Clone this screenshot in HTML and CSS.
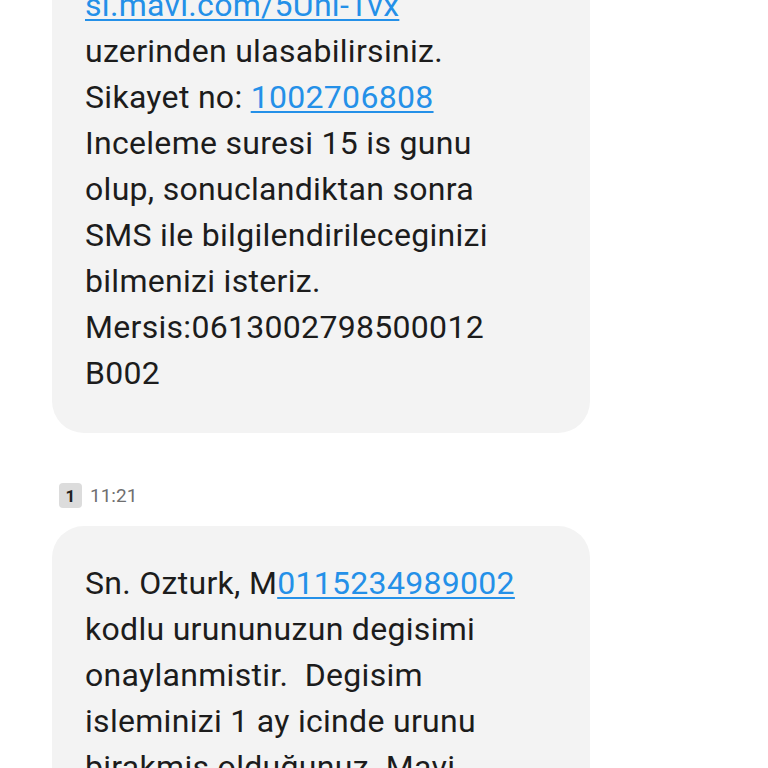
FILE: index.html
```html
<!DOCTYPE html>
<html>
<head>
<meta charset="utf-8">
<link rel="stylesheet" href="styles.css">
</head>
<body>
<div class="thread">
  <div class="bubble">
    <p class="msg"><a class="link" href="#">sl.mavi.com/5Uni-1vx</a><br>uzerinden ulasabilirsiniz.<br>Sikayet no: <a class="link" href="#">1002706808</a><br>Inceleme suresi 15 is gunu<br>olup, sonuclandiktan sonra<br>SMS ile bilgilendirileceginizi<br>bilmenizi isteriz.<br>Mersis:0613002798500012<br>B002</p>
  </div>
  <div class="meta">
    <span class="sim">1</span>
    <span class="time">11:21</span>
  </div>
  <div class="bubble">
    <p class="msg">Sn. Ozturk, M<a class="link" href="#">0115234989002</a><br>kodlu urununuzun degisimi<br>onaylanmistir.&nbsp; Degisim<br>isleminizi 1 ay icinde urunu<br>birakmis oldu&#287;unuz. Mavi<br>magazasindan yapabilirsiniz.</p>
  </div>
</div>
</body>
</html>
```
FILE: styles.css
```css
html, body {
  margin: 0;
  padding: 0;
  background: #ffffff;
  height: 768px;
  overflow: hidden;
}
body {
  font-family: Roboto, "Noto Sans", sans-serif;
  color: #1c1c1c;
}
.thread {
  margin-top: -52px;
  padding-left: 52px;
  display: flex;
  flex-direction: column;
}
.bubble {
  width: 538px;
  box-sizing: border-box;
  background: #f3f3f3;
  border-radius: 32px;
  padding: 34px 33px 37px 33px;
}
.msg {
  margin: 0;
  font-size: 32px;
  letter-spacing: 0.3px;
  line-height: 46px;
  white-space: nowrap;
}
.link {
  color: #2490e8;
  text-decoration: underline;
  text-decoration-thickness: 2px;
  text-underline-offset: 3px;
}
.meta {
  display: flex;
  align-items: center;
  gap: 8px;
  margin: 50px 0 18px 7px;
  height: 25px;
}
.sim {
  display: inline-flex;
  align-items: center;
  justify-content: center;
  width: 23px;
  height: 25px;
  background: #dcdcdc;
  border-radius: 4px;
  font-size: 17px;
  font-weight: 700;
  color: #222;
}
.time {
  font-size: 19px;
  color: #6f6f6f;
}
```
